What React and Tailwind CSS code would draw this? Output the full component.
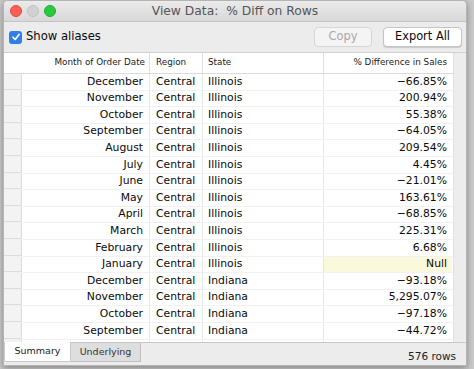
const rows = [
  ['December', 'Central', 'Illinois', '-66.85%'],
  ['November', 'Central', 'Illinois', '200.94%'],
  ['October', 'Central', 'Illinois', '55.38%'],
  ['September', 'Central', 'Illinois', '-64.05%'],
  ['August', 'Central', 'Illinois', '209.54%'],
  ['July', 'Central', 'Illinois', '4.45%'],
  ['June', 'Central', 'Illinois', '-21.01%'],
  ['May', 'Central', 'Illinois', '163.61%'],
  ['April', 'Central', 'Illinois', '-68.85%'],
  ['March', 'Central', 'Illinois', '225.31%'],
  ['February', 'Central', 'Illinois', '6.68%'],
  ['January', 'Central', 'Illinois', 'Null'],
  ['December', 'Central', 'Indiana', '-93.18%'],
  ['November', 'Central', 'Indiana', '5,295.07%'],
  ['October', 'Central', 'Indiana', '-97.18%'],
  ['September', 'Central', 'Indiana', '-44.72%'],
  ['August', 'Central', 'Indiana', '2,058.00%'],
];

const font = { fontFamily: '"DejaVu Sans", "Liberation Sans", sans-serif' };

function Row({ r }) {
  const isNull = r[3] === 'Null';
  return (
    <div className="flex h-[16.6px] shrink-0 items-center text-[10.8px] text-[#0a0a0a] border-b border-[#f1f1f1]">
      <div className="w-[18px] h-full bg-[#f3f3f3] border-r border-b border-[#dcdcdc]" />
      <div className="w-[128px] h-full flex items-center justify-end pr-[6px] border-r border-[#e6e6e6]">{r[0]}</div>
      <div className="w-[53px] h-full flex items-center pl-[6px] border-r border-[#e6e6e6]">{r[1]}</div>
      <div className="w-[121px] h-full flex items-center pl-[5px] border-r border-[#e6e6e6]">{r[2]}</div>
      <div className={`w-[128px] h-full flex items-center justify-end pr-[5px] ${isNull ? 'bg-[#fbf9dc]' : ''}`}>
        {r[3].replace('-', '\u2212')}
      </div>
    </div>
  );
}

export default function App() {
  return (
    <div className="w-[474px] h-[369px] bg-[#c9c9c9] overflow-hidden" style={font}>
      <div className="ml-[3px] w-[464px] h-[366px] flex flex-col rounded-t-[5px] overflow-hidden border border-[#b5b5b5] bg-[#ececec] shadow-[0_2px_6px_rgba(0,0,0,0.35)]">
        {/* title bar */}
        <div className="relative h-[21px] shrink-0 flex items-center pl-[6px] gap-[5px] bg-gradient-to-b from-[#ebebeb] to-[#d8d8d8] border-b border-[#c4c4c4]">
          <span className="w-[12px] h-[12px] rounded-full bg-[#fc5f57] border border-[#df4a43]" />
          <span className="w-[12px] h-[12px] rounded-full bg-[#d1d1d1] border border-[#c0c0c0]" />
          <span className="w-[12px] h-[12px] rounded-full bg-[#29c940] border border-[#1fae33]" />
          <div className="absolute inset-0 flex items-center justify-center text-[12.3px] text-[#555]">
            View Data:&nbsp; % Diff on Rows
          </div>
        </div>

        {/* toolbar */}
        <div className="h-[30px] shrink-0 flex items-center pl-[5px] pr-[4px]">
          <span className="w-[13px] h-[13px] rounded-[3px] bg-[#2f7fe6] flex items-center justify-center">
            <svg width="10" height="10" viewBox="0 0 10 10">
              <path d="M2 5.2 L4.2 7.5 L8.2 2.3" stroke="white" strokeWidth="1.6" fill="none" strokeLinecap="round" strokeLinejoin="round" />
            </svg>
          </span>
          <span className="ml-[4px] text-[11.6px] text-[#0a0a0a]">Show aliases</span>
          <div className="ml-auto flex items-center gap-[11px]">
            <button className="w-[58px] h-[20px] rounded-[4px] bg-[#f4f4f4] border border-[#d6d6d6] text-[11.4px] text-[#a8a8a8]">Copy</button>
            <button className="w-[79px] h-[20px] rounded-[4px] bg-white border border-[#c4c4c4] shadow-[0_1px_1px_rgba(0,0,0,0.15)] text-[11.4px] text-[#0a0a0a]">Export All</button>
          </div>
        </div>

        {/* table */}
        <div className="h-[290px] shrink-0 flex bg-white border-t border-[#d0d0d0] overflow-hidden">
          <div className="w-[449px] flex flex-col">
            <div className="flex h-[21px] shrink-0 items-center text-[8.8px] text-[#222] border-b border-[#dadada]">
              <div className="w-[18px] h-full" />
              <div className="w-[128px] h-full flex items-center justify-end pr-[4px] border-r border-[#e0e0e0]">Month of Order Date</div>
              <div className="w-[53px] h-full flex items-center pl-[6px] border-r border-[#e0e0e0]">Region</div>
              <div className="w-[121px] h-full flex items-center pl-[5px] border-r border-[#e0e0e0]">State</div>
              <div className="w-[128px] h-full flex items-center justify-end pr-[5px]">% Difference in Sales</div>
            </div>
            {rows.map((r, i) => (
              <Row key={i} r={r} />
            ))}
          </div>
          <div className="flex-1 bg-[#ededed] border-l border-[#e0e0e0]" />
        </div>

        {/* footer */}
        <div className="flex-1 flex items-start border-t border-[#c8c8c8] pr-[10px]">
          <div className="w-[67px] h-[20px] -mt-px bg-white border-x border-b border-[#c8c8c8] rounded-b-[2px] flex items-center justify-center text-[9.5px] text-[#222]">Summary</div>
          <div className="w-[70px] h-[19px] bg-[#dedede] border-r border-b border-[#c0c0c0] flex items-center justify-center text-[9.5px] text-[#333]">Underlying</div>
          <div className="ml-auto mt-[6px] text-[10.5px] text-[#222]">576 rows</div>
        </div>
      </div>
    </div>
  );
}
